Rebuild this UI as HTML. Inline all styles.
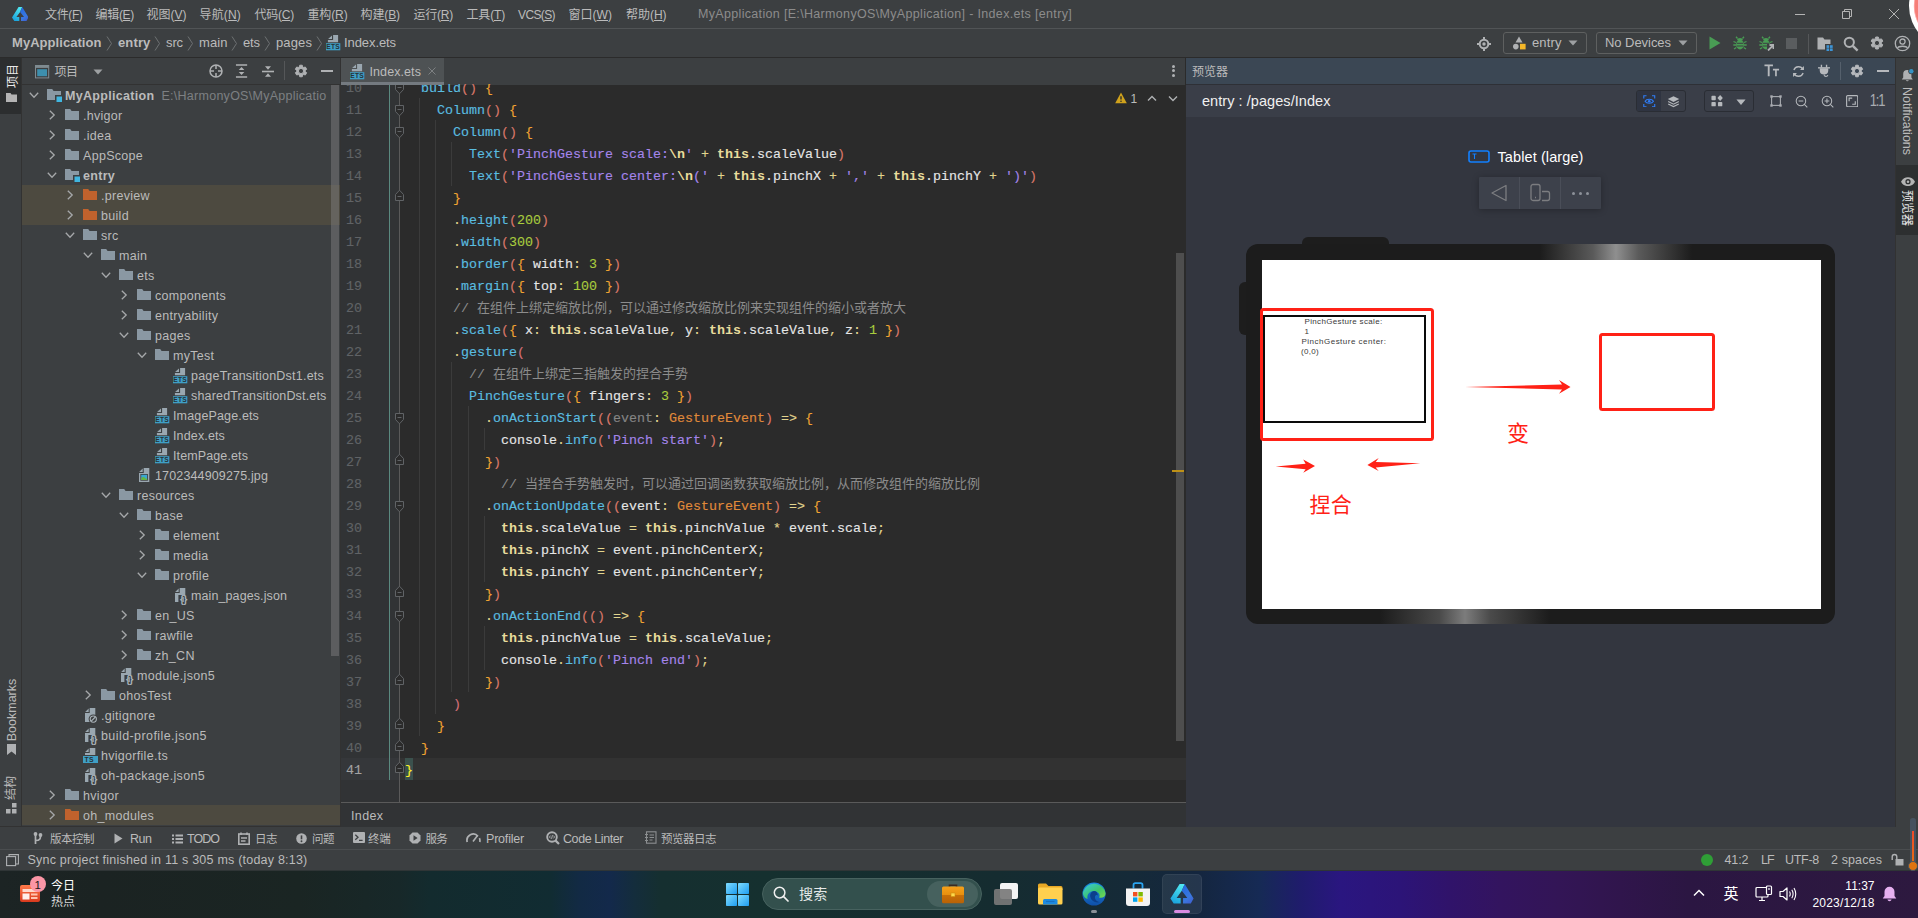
<!DOCTYPE html>
<html lang="zh-CN"><head><meta charset="utf-8"><title>MyApplication - Index.ets</title>
<style>
html,body{margin:0;padding:0;}
body{width:1918px;height:918px;overflow:hidden;background:#3c3f41;position:relative;font-family:'Liberation Sans','Noto Sans CJK SC',sans-serif;}
#root{position:absolute;left:0;top:0;width:1918px;height:918px;overflow:hidden;}
#root div,#root span.t,#root svg{position:absolute;}
span.t{white-space:pre;display:block;}
.code{position:absolute;white-space:pre;font-family:'Liberation Mono','Noto Sans CJK SC',monospace;font-size:13.333px;height:22px;line-height:22px;color:#e6e6e6;-webkit-text-stroke:0.12px currentColor;}
.code i{font-style:normal;font-size:13px;}
.f{color:#5abde0}.s{color:#a585ea}.k{color:#e8dc9c;font-weight:bold;-webkit-text-stroke:0}.n{color:#a9cc3e}.c{color:#8c8c8c;-webkit-text-stroke:0}
.ty{color:#e08a3a}.o{color:#e2d48e}.p1{color:#f0a332}.p2{color:#d8786a}.p3{color:#d47078}.g{color:#858585}
</style></head>
<body><div id="root">
<div style="left:0px;top:0px;width:1918px;height:871px;background:#3c3f41;"></div><div style="left:0px;top:28px;width:1918px;height:1px;background:#515456;"></div><div style="left:0px;top:57px;width:1918px;height:1px;background:#2b2b2b;"></div><svg style="left:11.8px;top:7px;" width="16.5" height="13.9" viewBox="0 0 16.5 13.9"><defs><linearGradient id="laa" x1="0.6" y1="0" x2="0.2" y2="1"><stop offset="0" stop-color="#4fe6f0"/><stop offset="1" stop-color="#18a0dc"/></linearGradient><linearGradient id="lba" x1="0.2" y1="0" x2="0.7" y2="1"><stop offset="0" stop-color="#2468de"/><stop offset=".7" stop-color="#3a78e0"/><stop offset="1" stop-color="#3f62d2"/></linearGradient></defs><path d="M6.56 0H10.2L8.1 4.9L4.4 9.9H7.3V13.9H2.3L0 10.4Z" fill="url(#laa)"/><path d="M10.2 0L16.5 10.4L14.5 13.9H9V9.9H12.05L8.1 4.9Z" fill="url(#lba)"/></svg><span class="t" style="letter-spacing:-0.369px;top:5.0px;height:20px;line-height:20px;font-size:12px;color:#bbbbbb;left:45px;">文件(<u>F</u>)</span><span class="t" style="letter-spacing:-0.303px;top:5.0px;height:20px;line-height:20px;font-size:12px;color:#bbbbbb;left:95.5px;">编辑(<u>E</u>)</span><span class="t" style="letter-spacing:-0.003px;top:5.0px;height:20px;line-height:20px;font-size:12px;color:#bbbbbb;left:146.5px;">视图(<u>V</u>)</span><span class="t" style="letter-spacing:0.166px;top:5.0px;height:20px;line-height:20px;font-size:12px;color:#bbbbbb;left:199.5px;">导航(<u>N</u>)</span><span class="t" style="letter-spacing:-0.234px;top:5.0px;height:20px;line-height:20px;font-size:12px;color:#bbbbbb;left:254.5px;">代码(<u>C</u>)</span><span class="t" style="letter-spacing:-0.134px;top:5.0px;height:20px;line-height:20px;font-size:12px;color:#bbbbbb;left:307.5px;">重构(<u>R</u>)</span><span class="t" style="letter-spacing:-0.103px;top:5.0px;height:20px;line-height:20px;font-size:12px;color:#bbbbbb;left:360.5px;">构建(<u>B</u>)</span><span class="t" style="letter-spacing:-0.234px;top:5.0px;height:20px;line-height:20px;font-size:12px;color:#bbbbbb;left:413.5px;">运行(<u>R</u>)</span><span class="t" style="letter-spacing:-0.169px;top:5.0px;height:20px;line-height:20px;font-size:12px;color:#bbbbbb;left:466.5px;">工具(<u>T</u>)</span><span class="t" style="letter-spacing:-0.615px;top:5.0px;height:20px;line-height:20px;font-size:12px;color:#bbbbbb;left:518px;">VCS(<u>S</u>)</span><span class="t" style="letter-spacing:0.034px;top:5.0px;height:20px;line-height:20px;font-size:12px;color:#bbbbbb;left:568.5px;">窗口(<u>W</u>)</span><span class="t" style="letter-spacing:-0.034px;top:5.0px;height:20px;line-height:20px;font-size:12px;color:#bbbbbb;left:626px;">帮助(<u>H</u>)</span><span class="t" style="letter-spacing:0.329px;top:4.0px;height:20px;line-height:20px;font-size:12.5px;color:#8c8c8c;left:698px;">MyApplication [E:\HarmonyOS\MyApplication] - Index.ets [entry]</span><svg style="left:1795px;top:9px;" width="10" height="10" viewBox="0 0 10 10"><path d="M0 5.5H10" stroke="#b4b4b4" stroke-width="1"/></svg><svg style="left:1842px;top:9px;" width="10" height="10" viewBox="0 0 10 10"><path d="M0.5 2.5H7.5V9.5H0.5Z M2.5 2.5V0.5H9.5V7.5H7.5" fill="none" stroke="#b4b4b4" stroke-width="1"/></svg><svg style="left:1889px;top:9px;" width="10" height="10" viewBox="0 0 10 10"><path d="M0 0L10 10M10 0L0 10" stroke="#b4b4b4" stroke-width="1"/></svg><div style="left:1909px;top:-36px;width:84px;height:84px;border-radius:50%;background:radial-gradient(circle at 50% 50%,#f0564e 0,#f6807a 36px,#fbb 37px,#ffffff 37.6px);box-sizing:border-box;"></div><span class="t" style="letter-spacing:0.050px;top:32.5px;height:20px;line-height:20px;font-size:13px;color:#bbbbbb;left:12px;font-weight:bold;">MyApplication</span><span class="t" style="letter-spacing:0.141px;top:32.5px;height:20px;line-height:20px;font-size:13px;color:#bbbbbb;left:118px;font-weight:bold;">entry</span><span class="t" style="letter-spacing:-0.115px;top:32.5px;height:20px;line-height:20px;font-size:13px;color:#bbbbbb;left:166px;">src</span><span class="t" style="letter-spacing:0.078px;top:32.5px;height:20px;line-height:20px;font-size:13px;color:#bbbbbb;left:199px;">main</span><span class="t" style="letter-spacing:-0.115px;top:32.5px;height:20px;line-height:20px;font-size:13px;color:#bbbbbb;left:243px;">ets</span><span class="t" style="letter-spacing:0.116px;top:32.5px;height:20px;line-height:20px;font-size:13px;color:#bbbbbb;left:276px;">pages</span><svg style="left:105.5px;top:36px;" width="7" height="15" viewBox="0 0 7 15"><path d="M1 0.5L5.5 7.5L1 14.5" fill="none" stroke="#6e7173" stroke-width="1"/></svg><svg style="left:153.5px;top:36px;" width="7" height="15" viewBox="0 0 7 15"><path d="M1 0.5L5.5 7.5L1 14.5" fill="none" stroke="#6e7173" stroke-width="1"/></svg><svg style="left:186.5px;top:36px;" width="7" height="15" viewBox="0 0 7 15"><path d="M1 0.5L5.5 7.5L1 14.5" fill="none" stroke="#6e7173" stroke-width="1"/></svg><svg style="left:230.5px;top:36px;" width="7" height="15" viewBox="0 0 7 15"><path d="M1 0.5L5.5 7.5L1 14.5" fill="none" stroke="#6e7173" stroke-width="1"/></svg><svg style="left:263.5px;top:36px;" width="7" height="15" viewBox="0 0 7 15"><path d="M1 0.5L5.5 7.5L1 14.5" fill="none" stroke="#6e7173" stroke-width="1"/></svg><svg style="left:315.5px;top:36px;" width="7" height="15" viewBox="0 0 7 15"><path d="M1 0.5L5.5 7.5L1 14.5" fill="none" stroke="#6e7173" stroke-width="1"/></svg><span class="t" style="letter-spacing:-0.085px;top:32.5px;height:20px;line-height:20px;font-size:13px;color:#bbbbbb;left:344px;">Index.ets</span><svg style="left:326px;top:35.3px;" width="15" height="16" viewBox="0 0 15 16"><path d="M7.1 0H12.1V7.2H1.9V5H7.1Z" fill="#9aa7b0"/><path d="M6 0.6V4H2.1Z" fill="#9aa7b0"/><rect x="0" y="8.2" width="14.3" height="7.1" fill="#3f9fc5"/><text x="7.15" y="14.3" font-size="6.6" font-weight="bold" text-anchor="middle" fill="#263238" font-family="Liberation Sans,sans-serif" letter-spacing=".3">ETS</text></svg><svg style="left:1476px;top:35.5px;" width="16" height="16" viewBox="0 0 16 16"><circle cx="8" cy="8" r="4.3" fill="none" stroke="#afb1b3" stroke-width="2"/><circle cx="8" cy="8" r="1.7" fill="#afb1b3"/><path d="M8 1V3M8 13V15M1 8H3M13 8H15" stroke="#afb1b3" stroke-width="2"/></svg><div style="left:1503px;top:32px;width:84px;height:22px;box-sizing:border-box;border:1px solid #5e6060;border-radius:3px;background:#3c3f41;"></div><svg style="left:1512px;top:36px;" width="14" height="14" viewBox="0 0 14 14"><path d="M7 0.5L10.5 6.5H3.5Z" fill="#afb1b3"/><circle cx="3.8" cy="10.6" r="2.8" fill="#afb1b3"/><rect x="8" y="7.8" width="5.6" height="5.6" fill="#f4b728"/></svg><span class="t" style="letter-spacing:0.119px;top:33.3px;height:20px;line-height:20px;font-size:13px;color:#bbbbbb;left:1532px;">entry</span><svg style="left:1568px;top:40px;" width="10" height="6" viewBox="0 0 10 6"><path d="M0.5 0.5H9.5L5 5.5Z" fill="#9da0a2"/></svg><div style="left:1596px;top:32px;width:101px;height:22px;box-sizing:border-box;border:1px solid #5e6060;border-radius:3px;background:#3c3f41;"></div><span class="t" style="letter-spacing:-0.047px;top:33.3px;height:20px;line-height:20px;font-size:13px;color:#bbbbbb;left:1605px;">No Devices</span><svg style="left:1678px;top:40px;" width="10" height="6" viewBox="0 0 10 6"><path d="M0.5 0.5H9.5L5 5.5Z" fill="#9da0a2"/></svg><svg style="left:1708px;top:36px;" width="14" height="14" viewBox="0 0 14 14"><path d="M1.5 0.5L12.5 7L1.5 13.5Z" fill="#499c54"/></svg><svg style="left:1733px;top:36px;" width="15" height="15" viewBox="0 0 15 15"><ellipse cx="7" cy="8.6" rx="3.9" ry="4.9" fill="#499c54"/><path d="M3.8 4.2A3.3 3 0 0 1 10.2 4.2Z" fill="#499c54"/><path d="M4.5 2.5L3 0.8M9.5 2.5L11 0.8M3 6.5L0.5 5.5M11 6.5L13.5 5.5M3 9H0.3M11 9H13.7M3.3 11.5L1 13M10.7 11.5L13 13" stroke="#499c54" stroke-width="1.3" fill="none"/><path d="M4 7.3H10M4 10H10" stroke="#3c3f41" stroke-width="1"/></svg><svg style="left:1759px;top:36px;" width="15" height="15" viewBox="0 0 15 15"><ellipse cx="7" cy="8.6" rx="3.9" ry="4.9" fill="#499c54"/><path d="M3.8 4.2A3.3 3 0 0 1 10.2 4.2Z" fill="#499c54"/><path d="M4.5 2.5L3 0.8M9.5 2.5L11 0.8M3 6.5L0.5 5.5M11 6.5L13.5 5.5M3 9H0.3M11 9H13.7M3.3 11.5L1 13M10.7 11.5L13 13" stroke="#499c54" stroke-width="1.3" fill="none"/><path d="M4 7.3H10M4 10H10" stroke="#3c3f41" stroke-width="1"/><rect x="8" y="8" width="7" height="7" fill="#3c3f41"/><path d="M9 14.5L14 9.5M10.5 9H14.5V13" stroke="#afb1b3" stroke-width="1.8" fill="none"/></svg><div style="left:1786px;top:38px;width:11px;height:11px;background:#5a5d5f;"></div><div style="left:1808px;top:34px;width:1px;height:20px;background:#555759;"></div><svg style="left:1817px;top:36px;" width="16" height="15" viewBox="0 0 16 15"><path d="M0.5 1.5H6L7.5 3.5H13.5V8H8V13.5H0.5Z" fill="#afb1b3"/><rect x="9.5" y="9.2" width="2.7" height="2.7" fill="#3d94d6"/><rect x="13" y="9.2" width="2.7" height="2.7" fill="#3d94d6"/><rect x="9.5" y="12.4" width="2.7" height="2.7" fill="#3d94d6"/><rect x="13" y="12.4" width="2.7" height="2.7" fill="#3d94d6"/></svg><svg style="left:1843px;top:36px;" width="16" height="16" viewBox="0 0 16 16"><circle cx="6.3" cy="6.3" r="4.6" fill="none" stroke="#afb1b3" stroke-width="2"/><path d="M9.8 9.8L14.6 14.6" stroke="#afb1b3" stroke-width="2.4"/></svg><svg style="left:1869px;top:35.2px;" width="16" height="16" viewBox="0 0 16 16"><g transform="translate(8 8)"><path d="M1.90 -4.08L1.27 -5.97L-1.27 -5.97L-1.90 -4.08L-2.58 -3.69L-4.53 -4.08L-5.80 -1.89L-4.48 -0.39L-4.48 0.39L-5.80 1.89L-4.53 4.08L-2.58 3.69L-1.90 4.08L-1.27 5.97L1.27 5.97L1.90 4.08L2.58 3.69L4.53 4.08L5.80 1.89L4.48 0.39L4.48 -0.39L5.80 -1.89L4.53 -4.08L2.58 -3.69ZM2.6 0A2.6 2.6 0 1 0 -2.6 0A2.6 2.6 0 1 0 2.6 0Z" fill="#afb1b3" fill-rule="evenodd" stroke="#afb1b3" stroke-width="1" stroke-linejoin="round"/></g></svg><svg style="left:1894px;top:35px;" width="17" height="17" viewBox="0 0 17 17"><circle cx="8.5" cy="8.5" r="7.2" fill="none" stroke="#afb1b3" stroke-width="1.3"/><circle cx="8.5" cy="6.6" r="2.6" fill="none" stroke="#afb1b3" stroke-width="1.3"/><path d="M3.6 13.2C4.6 10.6 12.4 10.6 13.4 13.2" fill="none" stroke="#afb1b3" stroke-width="1.3"/></svg><div style="left:0px;top:58px;width:22px;height:769px;background:#3c3f41;"></div><div style="left:0px;top:58px;width:21px;height:56px;background:#2c2e2f;"></div><span class="t" style="top:68.0px;height:16px;line-height:16px;font-size:12px;color:#e8e8e8;left:-87.0px;width:200px;text-align:center;transform:rotate(-90deg);transform-origin:50% 50%;">项目</span><svg style="left:6px;top:93px;" width="11" height="9" viewBox="0 0 11 9"><path d="M0 0H4.5L5.5 1.5H11V9H0Z" fill="#b4b4b4"/></svg><span class="t" style="top:702.0px;height:16px;line-height:16px;font-size:12.5px;color:#bbbbbb;left:-88.5px;width:200px;text-align:center;transform:rotate(-90deg);transform-origin:50% 50%;">Bookmarks</span><svg style="left:7px;top:744px;" width="9" height="11" viewBox="0 0 9 11"><path d="M0 0H9V11L4.5 7.5L0 11Z" fill="#afb1b3"/></svg><span class="t" style="top:780.0px;height:16px;line-height:16px;font-size:12px;color:#bbbbbb;left:-89.0px;width:200px;text-align:center;transform:rotate(-90deg);transform-origin:50% 50%;">结构</span><svg style="left:6px;top:803px;" width="11" height="11" viewBox="0 0 11 11"><rect x="6" y="0" width="4.5" height="4.5" fill="#afb1b3"/><rect x="0" y="6" width="4.5" height="4.5" fill="#afb1b3"/><rect x="6" y="6" width="4.5" height="4.5" fill="#afb1b3"/></svg><div style="left:21px;top:58px;width:1px;height:769px;background:#323232;"></div><div style="left:22px;top:58px;width:319px;height:26px;background:#3c3f41;"></div><div style="left:22px;top:84px;width:319px;height:1px;background:#323232;"></div><svg style="left:35px;top:64.5px;" width="15" height="14" viewBox="0 0 15 14"><rect x="0.5" y="0.5" width="13.2" height="12.4" fill="#3c3f41" stroke="#7f8b91" stroke-width="1"/><rect x="0.5" y="0.5" width="13.2" height="2.4" fill="#7f8b91"/><rect x="2.2" y="4.2" width="9.8" height="7" fill="#3d8fae"/></svg><span class="t" style="letter-spacing:-0.508px;top:61.5px;height:20px;line-height:20px;font-size:12px;color:#bbbbbb;left:54.5px;">项目</span><svg style="left:93px;top:69px;" width="10" height="6" viewBox="0 0 10 6"><path d="M0.5 0.5H9.5L5 5.5Z" fill="#9da0a2"/></svg><svg style="left:208px;top:62.7px;" width="16" height="16" viewBox="0 0 16 16"><circle cx="8" cy="8" r="6" fill="none" stroke="#afb1b3" stroke-width="1.5"/><path d="M8 2V6M8 10V14M2 8H6M10 8H14" stroke="#afb1b3" stroke-width="1.5"/></svg><svg style="left:235.4px;top:64.3px;" width="13.1" height="14" viewBox="0 0 14 15"><path d="M1 1H13M1 14H13" stroke="#afb1b3" stroke-width="1.6"/><path d="M7 3.2L10 6.4H4ZM7 11.8L10 8.6H4Z" fill="#afb1b3"/></svg><svg style="left:261px;top:64px;" width="14" height="15" viewBox="0 0 14 15"><path d="M1 7.5H13" stroke="#afb1b3" stroke-width="1.6"/><path d="M7 5.8L10 2.2H4ZM7 9.2L10 12.8H4Z" fill="#afb1b3"/></svg><div style="left:284px;top:61px;width:1px;height:19px;background:#555759;"></div><svg style="left:293px;top:62.8px;" width="16" height="16" viewBox="0 0 16 16"><g transform="translate(8 8)"><path d="M1.82 -3.90L1.23 -5.77L-1.23 -5.77L-1.82 -3.90L-2.47 -3.52L-4.38 -3.95L-5.61 -1.82L-4.28 -0.37L-4.28 0.37L-5.61 1.82L-4.38 3.95L-2.47 3.52L-1.82 3.90L-1.23 5.77L1.23 5.77L1.82 3.90L2.47 3.52L4.38 3.95L5.61 1.82L4.28 0.37L4.28 -0.37L5.61 -1.82L4.38 -3.95L2.47 -3.52ZM2.6 0A2.6 2.6 0 1 0 -2.6 0A2.6 2.6 0 1 0 2.6 0Z" fill="#afb1b3" fill-rule="evenodd" stroke="#afb1b3" stroke-width="1" stroke-linejoin="round"/></g></svg><div style="left:320.5px;top:70px;width:12.5px;height:2px;background:#afb1b3;"></div><svg style="left:28.5px;top:91.5px;" width="10" height="7" viewBox="0 0 10 7"><path d="M0.8 0.8L5 5.2L9.2 0.8" fill="none" stroke="#a6a8aa" stroke-width="1.3"/></svg><svg style="left:47px;top:88.5px;" width="15" height="14" viewBox="0 0 15 14"><path d="M0 0H5.2L6.6 2H14V6H8V11H0Z" fill="#8a98a3"/><rect x="9.5" y="7.5" width="5.5" height="5.5" fill="#40b6e0"/></svg><span class="t" style="letter-spacing:0.314px;top:85.5px;height:20px;line-height:20px;font-size:12.5px;color:#bbbbbb;left:65px;font-weight:bold;">MyApplication</span><svg style="left:48.5px;top:110px;" width="7" height="10" viewBox="0 0 7 10"><path d="M0.8 0.8L5.2 5L0.8 9.2" fill="none" stroke="#a6a8aa" stroke-width="1.3"/></svg><svg style="left:65px;top:108.5px;" width="15" height="14" viewBox="0 0 15 14"><path d="M0 0H5.2L6.6 2H14V11H0Z" fill="#8a98a3"/></svg><span class="t" style="letter-spacing:0.281px;top:105.5px;height:20px;line-height:20px;font-size:12.5px;color:#bbbbbb;left:83px;">.hvigor</span><svg style="left:48.5px;top:130px;" width="7" height="10" viewBox="0 0 7 10"><path d="M0.8 0.8L5.2 5L0.8 9.2" fill="none" stroke="#a6a8aa" stroke-width="1.3"/></svg><svg style="left:65px;top:128.5px;" width="15" height="14" viewBox="0 0 15 14"><path d="M0 0H5.2L6.6 2H14V11H0Z" fill="#8a98a3"/></svg><span class="t" style="top:125.5px;height:20px;line-height:20px;font-size:12.5px;color:#bbbbbb;left:83px;letter-spacing:0.3px;">.idea</span><svg style="left:48.5px;top:150px;" width="7" height="10" viewBox="0 0 7 10"><path d="M0.8 0.8L5.2 5L0.8 9.2" fill="none" stroke="#a6a8aa" stroke-width="1.3"/></svg><svg style="left:65px;top:148.5px;" width="15" height="14" viewBox="0 0 15 14"><path d="M0 0H5.2L6.6 2H14V11H0Z" fill="#8a98a3"/></svg><span class="t" style="top:145.5px;height:20px;line-height:20px;font-size:12.5px;color:#bbbbbb;left:83px;letter-spacing:0.3px;">AppScope</span><svg style="left:46.5px;top:171.5px;" width="10" height="7" viewBox="0 0 10 7"><path d="M0.8 0.8L5 5.2L9.2 0.8" fill="none" stroke="#a6a8aa" stroke-width="1.3"/></svg><svg style="left:65px;top:168.5px;" width="15" height="14" viewBox="0 0 15 14"><path d="M0 0H5.2L6.6 2H14V6H8V11H0Z" fill="#8a98a3"/><rect x="9.5" y="7.5" width="5.5" height="5.5" fill="#40b6e0"/></svg><span class="t" style="top:165.5px;height:20px;line-height:20px;font-size:12.5px;color:#bbbbbb;left:83px;font-weight:bold;letter-spacing:0.3px;">entry</span><div style="left:22px;top:185px;width:318px;height:20px;background:#4d4a40;"></div><svg style="left:66.5px;top:190px;" width="7" height="10" viewBox="0 0 7 10"><path d="M0.8 0.8L5.2 5L0.8 9.2" fill="none" stroke="#a6a8aa" stroke-width="1.3"/></svg><svg style="left:83px;top:188.5px;" width="15" height="14" viewBox="0 0 15 14"><path d="M0 0H5.2L6.6 2H14V11H0Z" fill="#c0622d"/></svg><span class="t" style="top:185.5px;height:20px;line-height:20px;font-size:12.5px;color:#bbbbbb;left:101px;letter-spacing:0.3px;">.preview</span><div style="left:22px;top:205px;width:318px;height:20px;background:#4d4a40;"></div><svg style="left:66.5px;top:210px;" width="7" height="10" viewBox="0 0 7 10"><path d="M0.8 0.8L5.2 5L0.8 9.2" fill="none" stroke="#a6a8aa" stroke-width="1.3"/></svg><svg style="left:83px;top:208.5px;" width="15" height="14" viewBox="0 0 15 14"><path d="M0 0H5.2L6.6 2H14V11H0Z" fill="#c0622d"/></svg><span class="t" style="top:205.5px;height:20px;line-height:20px;font-size:12.5px;color:#bbbbbb;left:101px;letter-spacing:0.3px;">build</span><svg style="left:64.5px;top:231.5px;" width="10" height="7" viewBox="0 0 10 7"><path d="M0.8 0.8L5 5.2L9.2 0.8" fill="none" stroke="#a6a8aa" stroke-width="1.3"/></svg><svg style="left:83px;top:228.5px;" width="15" height="14" viewBox="0 0 15 14"><path d="M0 0H5.2L6.6 2H14V11H0Z" fill="#8a98a3"/></svg><span class="t" style="top:225.5px;height:20px;line-height:20px;font-size:12.5px;color:#bbbbbb;left:101px;letter-spacing:0.3px;">src</span><svg style="left:82.5px;top:251.5px;" width="10" height="7" viewBox="0 0 10 7"><path d="M0.8 0.8L5 5.2L9.2 0.8" fill="none" stroke="#a6a8aa" stroke-width="1.3"/></svg><svg style="left:101px;top:248.5px;" width="15" height="14" viewBox="0 0 15 14"><path d="M0 0H5.2L6.6 2H14V11H0Z" fill="#8a98a3"/></svg><span class="t" style="top:245.5px;height:20px;line-height:20px;font-size:12.5px;color:#bbbbbb;left:119px;letter-spacing:0.3px;">main</span><svg style="left:100.5px;top:271.5px;" width="10" height="7" viewBox="0 0 10 7"><path d="M0.8 0.8L5 5.2L9.2 0.8" fill="none" stroke="#a6a8aa" stroke-width="1.3"/></svg><svg style="left:119px;top:268.5px;" width="15" height="14" viewBox="0 0 15 14"><path d="M0 0H5.2L6.6 2H14V11H0Z" fill="#8a98a3"/></svg><span class="t" style="top:265.5px;height:20px;line-height:20px;font-size:12.5px;color:#bbbbbb;left:137px;letter-spacing:0.3px;">ets</span><svg style="left:120.5px;top:290px;" width="7" height="10" viewBox="0 0 7 10"><path d="M0.8 0.8L5.2 5L0.8 9.2" fill="none" stroke="#a6a8aa" stroke-width="1.3"/></svg><svg style="left:137px;top:288.5px;" width="15" height="14" viewBox="0 0 15 14"><path d="M0 0H5.2L6.6 2H14V11H0Z" fill="#8a98a3"/></svg><span class="t" style="top:285.5px;height:20px;line-height:20px;font-size:12.5px;color:#bbbbbb;left:155px;letter-spacing:0.3px;">components</span><svg style="left:120.5px;top:310px;" width="7" height="10" viewBox="0 0 7 10"><path d="M0.8 0.8L5.2 5L0.8 9.2" fill="none" stroke="#a6a8aa" stroke-width="1.3"/></svg><svg style="left:137px;top:308.5px;" width="15" height="14" viewBox="0 0 15 14"><path d="M0 0H5.2L6.6 2H14V11H0Z" fill="#8a98a3"/></svg><span class="t" style="top:305.5px;height:20px;line-height:20px;font-size:12.5px;color:#bbbbbb;left:155px;letter-spacing:0.3px;">entryability</span><svg style="left:118.5px;top:331.5px;" width="10" height="7" viewBox="0 0 10 7"><path d="M0.8 0.8L5 5.2L9.2 0.8" fill="none" stroke="#a6a8aa" stroke-width="1.3"/></svg><svg style="left:137px;top:328.5px;" width="15" height="14" viewBox="0 0 15 14"><path d="M0 0H5.2L6.6 2H14V11H0Z" fill="#8a98a3"/></svg><span class="t" style="top:325.5px;height:20px;line-height:20px;font-size:12.5px;color:#bbbbbb;left:155px;letter-spacing:0.3px;">pages</span><svg style="left:136.5px;top:351.5px;" width="10" height="7" viewBox="0 0 10 7"><path d="M0.8 0.8L5 5.2L9.2 0.8" fill="none" stroke="#a6a8aa" stroke-width="1.3"/></svg><svg style="left:155px;top:348.5px;" width="15" height="14" viewBox="0 0 15 14"><path d="M0 0H5.2L6.6 2H14V11H0Z" fill="#8a98a3"/></svg><span class="t" style="top:345.5px;height:20px;line-height:20px;font-size:12.5px;color:#bbbbbb;left:173px;letter-spacing:0.3px;">myTest</span><svg style="left:172.9px;top:367.8px;" width="15" height="16" viewBox="0 0 15 16"><path d="M7.1 0H12.1V7.2H1.9V5H7.1Z" fill="#9aa7b0"/><path d="M6 0.6V4H2.1Z" fill="#9aa7b0"/><rect x="0" y="8.2" width="14.3" height="7.1" fill="#3f9fc5"/><text x="7.15" y="14.3" font-size="6.6" font-weight="bold" text-anchor="middle" fill="#263238" font-family="Liberation Sans,sans-serif" letter-spacing=".3">ETS</text></svg><span class="t" style="letter-spacing:0.224px;top:365.5px;height:20px;line-height:20px;font-size:12.5px;color:#bbbbbb;left:191px;">pageTransitionDst1.ets</span><svg style="left:172.9px;top:387.8px;" width="15" height="16" viewBox="0 0 15 16"><path d="M7.1 0H12.1V7.2H1.9V5H7.1Z" fill="#9aa7b0"/><path d="M6 0.6V4H2.1Z" fill="#9aa7b0"/><rect x="0" y="8.2" width="14.3" height="7.1" fill="#3f9fc5"/><text x="7.15" y="14.3" font-size="6.6" font-weight="bold" text-anchor="middle" fill="#263238" font-family="Liberation Sans,sans-serif" letter-spacing=".3">ETS</text></svg><span class="t" style="letter-spacing:0.172px;top:385.5px;height:20px;line-height:20px;font-size:12.5px;color:#bbbbbb;left:191px;">sharedTransitionDst.ets</span><svg style="left:154.9px;top:407.8px;" width="15" height="16" viewBox="0 0 15 16"><path d="M7.1 0H12.1V7.2H1.9V5H7.1Z" fill="#9aa7b0"/><path d="M6 0.6V4H2.1Z" fill="#9aa7b0"/><rect x="0" y="8.2" width="14.3" height="7.1" fill="#3f9fc5"/><text x="7.15" y="14.3" font-size="6.6" font-weight="bold" text-anchor="middle" fill="#263238" font-family="Liberation Sans,sans-serif" letter-spacing=".3">ETS</text></svg><span class="t" style="letter-spacing:0.147px;top:405.5px;height:20px;line-height:20px;font-size:12.5px;color:#bbbbbb;left:173px;">ImagePage.ets</span><svg style="left:154.9px;top:427.8px;" width="15" height="16" viewBox="0 0 15 16"><path d="M7.1 0H12.1V7.2H1.9V5H7.1Z" fill="#9aa7b0"/><path d="M6 0.6V4H2.1Z" fill="#9aa7b0"/><rect x="0" y="8.2" width="14.3" height="7.1" fill="#3f9fc5"/><text x="7.15" y="14.3" font-size="6.6" font-weight="bold" text-anchor="middle" fill="#263238" font-family="Liberation Sans,sans-serif" letter-spacing=".3">ETS</text></svg><span class="t" style="letter-spacing:0.141px;top:425.5px;height:20px;line-height:20px;font-size:12.5px;color:#bbbbbb;left:173px;">Index.ets</span><svg style="left:154.9px;top:447.8px;" width="15" height="16" viewBox="0 0 15 16"><path d="M7.1 0H12.1V7.2H1.9V5H7.1Z" fill="#9aa7b0"/><path d="M6 0.6V4H2.1Z" fill="#9aa7b0"/><rect x="0" y="8.2" width="14.3" height="7.1" fill="#3f9fc5"/><text x="7.15" y="14.3" font-size="6.6" font-weight="bold" text-anchor="middle" fill="#263238" font-family="Liberation Sans,sans-serif" letter-spacing=".3">ETS</text></svg><span class="t" style="letter-spacing:0.112px;top:445.5px;height:20px;line-height:20px;font-size:12.5px;color:#bbbbbb;left:173px;">ItemPage.ets</span><svg style="left:139px;top:468px;" width="11" height="15" viewBox="0 0 11 15"><path d="M4.7 0H10.3V14H0V5H4.7Z" fill="#9aa7b0"/><path d="M3.7 0.6V4H0.2Z" fill="#9aa7b0"/><rect x="1.4" y="6" width="7.5" height="6.7" fill="#3c3f41"/><rect x="2.2" y="6.8" width="5.9" height="5.1" fill="#3aa6d0"/><path d="M2.2 11.9V10.2C3.6 8.6 5.2 8.8 6.4 10.2L8.1 10.9V11.9Z" fill="#62b543"/></svg><span class="t" style="letter-spacing:0.145px;top:465.5px;height:20px;line-height:20px;font-size:12.5px;color:#bbbbbb;left:155px;">1702344909275.jpg</span><svg style="left:100.5px;top:491.5px;" width="10" height="7" viewBox="0 0 10 7"><path d="M0.8 0.8L5 5.2L9.2 0.8" fill="none" stroke="#a6a8aa" stroke-width="1.3"/></svg><svg style="left:119px;top:488.5px;" width="15" height="14" viewBox="0 0 15 14"><path d="M0 0H5.2L6.6 2H14V11H0Z" fill="#8a98a3"/></svg><span class="t" style="top:485.5px;height:20px;line-height:20px;font-size:12.5px;color:#bbbbbb;left:137px;letter-spacing:0.3px;">resources</span><svg style="left:118.5px;top:511.5px;" width="10" height="7" viewBox="0 0 10 7"><path d="M0.8 0.8L5 5.2L9.2 0.8" fill="none" stroke="#a6a8aa" stroke-width="1.3"/></svg><svg style="left:137px;top:508.5px;" width="15" height="14" viewBox="0 0 15 14"><path d="M0 0H5.2L6.6 2H14V11H0Z" fill="#8a98a3"/></svg><span class="t" style="top:505.5px;height:20px;line-height:20px;font-size:12.5px;color:#bbbbbb;left:155px;letter-spacing:0.3px;">base</span><svg style="left:138.5px;top:530px;" width="7" height="10" viewBox="0 0 7 10"><path d="M0.8 0.8L5.2 5L0.8 9.2" fill="none" stroke="#a6a8aa" stroke-width="1.3"/></svg><svg style="left:155px;top:528.5px;" width="15" height="14" viewBox="0 0 15 14"><path d="M0 0H5.2L6.6 2H14V11H0Z" fill="#8a98a3"/></svg><span class="t" style="top:525.5px;height:20px;line-height:20px;font-size:12.5px;color:#bbbbbb;left:173px;letter-spacing:0.3px;">element</span><svg style="left:138.5px;top:550px;" width="7" height="10" viewBox="0 0 7 10"><path d="M0.8 0.8L5.2 5L0.8 9.2" fill="none" stroke="#a6a8aa" stroke-width="1.3"/></svg><svg style="left:155px;top:548.5px;" width="15" height="14" viewBox="0 0 15 14"><path d="M0 0H5.2L6.6 2H14V11H0Z" fill="#8a98a3"/></svg><span class="t" style="top:545.5px;height:20px;line-height:20px;font-size:12.5px;color:#bbbbbb;left:173px;letter-spacing:0.3px;">media</span><svg style="left:136.5px;top:571.5px;" width="10" height="7" viewBox="0 0 10 7"><path d="M0.8 0.8L5 5.2L9.2 0.8" fill="none" stroke="#a6a8aa" stroke-width="1.3"/></svg><svg style="left:155px;top:568.5px;" width="15" height="14" viewBox="0 0 15 14"><path d="M0 0H5.2L6.6 2H14V11H0Z" fill="#8a98a3"/></svg><span class="t" style="top:565.5px;height:20px;line-height:20px;font-size:12.5px;color:#bbbbbb;left:173px;letter-spacing:0.3px;">profile</span><svg style="left:175px;top:588px;" width="14" height="17" viewBox="0 0 14 17"><path d="M4.7 0H10.3V14H0V5H4.7Z" fill="#9aa7b0"/><path d="M3.7 0.6V4H0.2Z" fill="#9aa7b0"/><path d="M3.4 7H14V17H3.4Z" fill="#3c3f41"/><text x="8.4" y="14.6" font-size="10" font-weight="bold" text-anchor="middle" fill="#aab3b9" font-family="Liberation Sans,sans-serif" letter-spacing="-.6">{}</text><path d="M8.1 9V14" stroke="#aab3b9" stroke-width="1.2"/></svg><span class="t" style="letter-spacing:0.099px;top:585.5px;height:20px;line-height:20px;font-size:12.5px;color:#bbbbbb;left:191px;">main_pages.json</span><svg style="left:120.5px;top:610px;" width="7" height="10" viewBox="0 0 7 10"><path d="M0.8 0.8L5.2 5L0.8 9.2" fill="none" stroke="#a6a8aa" stroke-width="1.3"/></svg><svg style="left:137px;top:608.5px;" width="15" height="14" viewBox="0 0 15 14"><path d="M0 0H5.2L6.6 2H14V11H0Z" fill="#8a98a3"/></svg><span class="t" style="top:605.5px;height:20px;line-height:20px;font-size:12.5px;color:#bbbbbb;left:155px;letter-spacing:0.3px;">en_US</span><svg style="left:120.5px;top:630px;" width="7" height="10" viewBox="0 0 7 10"><path d="M0.8 0.8L5.2 5L0.8 9.2" fill="none" stroke="#a6a8aa" stroke-width="1.3"/></svg><svg style="left:137px;top:628.5px;" width="15" height="14" viewBox="0 0 15 14"><path d="M0 0H5.2L6.6 2H14V11H0Z" fill="#8a98a3"/></svg><span class="t" style="top:625.5px;height:20px;line-height:20px;font-size:12.5px;color:#bbbbbb;left:155px;letter-spacing:0.3px;">rawfile</span><svg style="left:120.5px;top:650px;" width="7" height="10" viewBox="0 0 7 10"><path d="M0.8 0.8L5.2 5L0.8 9.2" fill="none" stroke="#a6a8aa" stroke-width="1.3"/></svg><svg style="left:137px;top:648.5px;" width="15" height="14" viewBox="0 0 15 14"><path d="M0 0H5.2L6.6 2H14V11H0Z" fill="#8a98a3"/></svg><span class="t" style="top:645.5px;height:20px;line-height:20px;font-size:12.5px;color:#bbbbbb;left:155px;letter-spacing:0.3px;">zh_CN</span><svg style="left:121px;top:668px;" width="14" height="17" viewBox="0 0 14 17"><path d="M4.7 0H10.3V14H0V5H4.7Z" fill="#9aa7b0"/><path d="M3.7 0.6V4H0.2Z" fill="#9aa7b0"/><path d="M3.4 7H14V17H3.4Z" fill="#3c3f41"/><text x="8.4" y="14.6" font-size="10" font-weight="bold" text-anchor="middle" fill="#aab3b9" font-family="Liberation Sans,sans-serif" letter-spacing="-.6">{}</text><path d="M8.1 9V14" stroke="#aab3b9" stroke-width="1.2"/></svg><span class="t" style="letter-spacing:0.303px;top:665.5px;height:20px;line-height:20px;font-size:12.5px;color:#bbbbbb;left:137px;">module.json5</span><svg style="left:84.5px;top:690px;" width="7" height="10" viewBox="0 0 7 10"><path d="M0.8 0.8L5.2 5L0.8 9.2" fill="none" stroke="#a6a8aa" stroke-width="1.3"/></svg><svg style="left:101px;top:688.5px;" width="15" height="14" viewBox="0 0 15 14"><path d="M0 0H5.2L6.6 2H14V11H0Z" fill="#8a98a3"/></svg><span class="t" style="top:685.5px;height:20px;line-height:20px;font-size:12.5px;color:#bbbbbb;left:119px;letter-spacing:0.3px;">ohosTest</span><svg style="left:85px;top:708px;" width="14" height="16" viewBox="0 0 14 16"><path d="M4.7 0H10.3V14H0V5H4.7Z" fill="#9aa7b0"/><path d="M3.7 0.6V4H0.2Z" fill="#9aa7b0"/><circle cx="8.3" cy="11.1" r="4.7" fill="#3c3f41"/><circle cx="8.3" cy="11.1" r="3.1" fill="none" stroke="#aab3b9" stroke-width="1.1"/><path d="M6.2 13.2L10.4 9" stroke="#aab3b9" stroke-width="1.1"/></svg><span class="t" style="top:705.5px;height:20px;line-height:20px;font-size:12.5px;color:#bbbbbb;left:101px;letter-spacing:0.3px;">.gitignore</span><svg style="left:85px;top:728px;" width="14" height="17" viewBox="0 0 14 17"><path d="M4.7 0H10.3V14H0V5H4.7Z" fill="#9aa7b0"/><path d="M3.7 0.6V4H0.2Z" fill="#9aa7b0"/><path d="M3.4 7H14V17H3.4Z" fill="#3c3f41"/><text x="8.4" y="14.6" font-size="10" font-weight="bold" text-anchor="middle" fill="#aab3b9" font-family="Liberation Sans,sans-serif" letter-spacing="-.6">{}</text><path d="M8.1 9V14" stroke="#aab3b9" stroke-width="1.2"/></svg><span class="t" style="letter-spacing:0.422px;top:725.5px;height:20px;line-height:20px;font-size:12.5px;color:#bbbbbb;left:101px;">build-profile.json5</span><svg style="left:83px;top:748px;" width="16" height="15" viewBox="0 0 16 15"><g transform="translate(2 0)"><path d="M4.7 0H10.3V7H0V5H4.7Z" fill="#9aa7b0"/><path d="M3.7 0.6V4H0.2Z" fill="#9aa7b0"/></g><rect x="0" y="8" width="15" height="7" fill="#3f9fc5"/><text x="1.5" y="14" font-size="6.8" font-weight="bold" fill="#263238" font-family="Liberation Sans,sans-serif" letter-spacing=".3">TS</text></svg><span class="t" style="letter-spacing:0.290px;top:745.5px;height:20px;line-height:20px;font-size:12.5px;color:#bbbbbb;left:101px;">hvigorfile.ts</span><svg style="left:85px;top:768px;" width="14" height="17" viewBox="0 0 14 17"><path d="M4.7 0H10.3V14H0V5H4.7Z" fill="#9aa7b0"/><path d="M3.7 0.6V4H0.2Z" fill="#9aa7b0"/><path d="M3.4 7H14V17H3.4Z" fill="#3c3f41"/><text x="8.4" y="14.6" font-size="10" font-weight="bold" text-anchor="middle" fill="#aab3b9" font-family="Liberation Sans,sans-serif" letter-spacing="-.6">{}</text><path d="M8.1 9V14" stroke="#aab3b9" stroke-width="1.2"/></svg><span class="t" style="letter-spacing:0.332px;top:765.5px;height:20px;line-height:20px;font-size:12.5px;color:#bbbbbb;left:101px;">oh-package.json5</span><svg style="left:48.5px;top:790px;" width="7" height="10" viewBox="0 0 7 10"><path d="M0.8 0.8L5.2 5L0.8 9.2" fill="none" stroke="#a6a8aa" stroke-width="1.3"/></svg><svg style="left:65px;top:788.5px;" width="15" height="14" viewBox="0 0 15 14"><path d="M0 0H5.2L6.6 2H14V11H0Z" fill="#8a98a3"/></svg><span class="t" style="top:785.5px;height:20px;line-height:20px;font-size:12.5px;color:#bbbbbb;left:83px;letter-spacing:0.3px;">hvigor</span><div style="left:22px;top:805px;width:318px;height:20px;background:#4d4a40;"></div><svg style="left:48.5px;top:810px;" width="7" height="10" viewBox="0 0 7 10"><path d="M0.8 0.8L5.2 5L0.8 9.2" fill="none" stroke="#a6a8aa" stroke-width="1.3"/></svg><svg style="left:65px;top:808.5px;" width="15" height="14" viewBox="0 0 15 14"><path d="M0 0H5.2L6.6 2H14V11H0Z" fill="#c0622d"/></svg><span class="t" style="top:805.5px;height:20px;line-height:20px;font-size:12.5px;color:#bbbbbb;left:83px;letter-spacing:0.3px;">oh_modules</span><span class="t" style="letter-spacing:0.264px;top:85.5px;height:20px;line-height:20px;font-size:12.5px;color:#7d8083;left:161.5px;">E:\HarmonyOS\MyApplicatio</span><div style="left:331px;top:85px;width:8px;height:571px;background:rgba(128,128,128,0.48);"></div><div style="left:340px;top:58px;width:1px;height:769px;background:#323232;"></div><div style="left:22px;top:826px;width:319px;height:1px;background:#323232;"></div><div style="left:341px;top:85px;width:845px;height:717px;background:#2b2b2b;"></div><div style="left:341px;top:85px;width:58px;height:717px;background:#313335;"></div><div style="left:341px;top:758px;width:58px;height:22px;background:#35373a;"></div><div style="left:400px;top:758px;width:786px;height:22px;background:#323232;"></div><div style="left:389px;top:85px;width:1px;height:695px;background:#5b8a80;"></div><div style="left:399px;top:85px;width:1px;height:717px;background:#5a5a5a;"></div><div style="left:419px;top:98px;width:1px;height:638px;background:#3b3b3b;"></div><div style="left:435px;top:120px;width:1px;height:594px;background:#3b3b3b;"></div><div style="left:451px;top:142px;width:1px;height:44px;background:#3b3b3b;"></div><div style="left:451px;top:362px;width:1px;height:330px;background:#3b3b3b;"></div><div style="left:468px;top:406px;width:1px;height:286px;background:#3b3b3b;"></div><div style="left:484px;top:428px;width:1px;height:22px;background:#3b3b3b;"></div><div style="left:484px;top:516px;width:1px;height:66px;background:#3b3b3b;"></div><div style="left:484px;top:626px;width:1px;height:44px;background:#3b3b3b;"></div><svg style="left:394.5px;top:83px;" width="10" height="12" viewBox="0 0 10 12"><path d="M0.5 0.5H8.5V6.5L4.5 10.8L0.5 6.5Z" fill="#2b2b2b" stroke="#606366" stroke-width="1"/><path d="M2.5 4.5H6.5" stroke="#606366" stroke-width="1"/></svg><svg style="left:394.5px;top:105px;" width="10" height="12" viewBox="0 0 10 12"><path d="M0.5 0.5H8.5V6.5L4.5 10.8L0.5 6.5Z" fill="#2b2b2b" stroke="#606366" stroke-width="1"/><path d="M2.5 4.5H6.5" stroke="#606366" stroke-width="1"/></svg><svg style="left:394.5px;top:127px;" width="10" height="12" viewBox="0 0 10 12"><path d="M0.5 0.5H8.5V6.5L4.5 10.8L0.5 6.5Z" fill="#2b2b2b" stroke="#606366" stroke-width="1"/><path d="M2.5 4.5H6.5" stroke="#606366" stroke-width="1"/></svg><svg style="left:394.5px;top:413px;" width="10" height="12" viewBox="0 0 10 12"><path d="M0.5 0.5H8.5V6.5L4.5 10.8L0.5 6.5Z" fill="#2b2b2b" stroke="#606366" stroke-width="1"/><path d="M2.5 4.5H6.5" stroke="#606366" stroke-width="1"/></svg><svg style="left:394.5px;top:501px;" width="10" height="12" viewBox="0 0 10 12"><path d="M0.5 0.5H8.5V6.5L4.5 10.8L0.5 6.5Z" fill="#2b2b2b" stroke="#606366" stroke-width="1"/><path d="M2.5 4.5H6.5" stroke="#606366" stroke-width="1"/></svg><svg style="left:394.5px;top:611px;" width="10" height="12" viewBox="0 0 10 12"><path d="M0.5 0.5H8.5V6.5L4.5 10.8L0.5 6.5Z" fill="#2b2b2b" stroke="#606366" stroke-width="1"/><path d="M2.5 4.5H6.5" stroke="#606366" stroke-width="1"/></svg><svg style="left:394.5px;top:189px;" width="10" height="12" viewBox="0 0 10 12"><path d="M0.5 11.5H8.5V5.5L4.5 1.2L0.5 5.5Z" fill="#2b2b2b" stroke="#606366" stroke-width="1"/><path d="M2.5 7.5H6.5" stroke="#606366" stroke-width="1"/></svg><svg style="left:394.5px;top:453px;" width="10" height="12" viewBox="0 0 10 12"><path d="M0.5 11.5H8.5V5.5L4.5 1.2L0.5 5.5Z" fill="#2b2b2b" stroke="#606366" stroke-width="1"/><path d="M2.5 7.5H6.5" stroke="#606366" stroke-width="1"/></svg><svg style="left:394.5px;top:585px;" width="10" height="12" viewBox="0 0 10 12"><path d="M0.5 11.5H8.5V5.5L4.5 1.2L0.5 5.5Z" fill="#2b2b2b" stroke="#606366" stroke-width="1"/><path d="M2.5 7.5H6.5" stroke="#606366" stroke-width="1"/></svg><svg style="left:394.5px;top:673px;" width="10" height="12" viewBox="0 0 10 12"><path d="M0.5 11.5H8.5V5.5L4.5 1.2L0.5 5.5Z" fill="#2b2b2b" stroke="#606366" stroke-width="1"/><path d="M2.5 7.5H6.5" stroke="#606366" stroke-width="1"/></svg><svg style="left:394.5px;top:717px;" width="10" height="12" viewBox="0 0 10 12"><path d="M0.5 11.5H8.5V5.5L4.5 1.2L0.5 5.5Z" fill="#2b2b2b" stroke="#606366" stroke-width="1"/><path d="M2.5 7.5H6.5" stroke="#606366" stroke-width="1"/></svg><svg style="left:394.5px;top:739px;" width="10" height="12" viewBox="0 0 10 12"><path d="M0.5 11.5H8.5V5.5L4.5 1.2L0.5 5.5Z" fill="#2b2b2b" stroke="#606366" stroke-width="1"/><path d="M2.5 7.5H6.5" stroke="#606366" stroke-width="1"/></svg><svg style="left:394.5px;top:761px;" width="10" height="12" viewBox="0 0 10 12"><path d="M0.5 11.5H8.5V5.5L4.5 1.2L0.5 5.5Z" fill="#2b2b2b" stroke="#606366" stroke-width="1"/><path d="M2.5 7.5H6.5" stroke="#606366" stroke-width="1"/></svg><span class="code" style="left:346px;top:78px;color:#606366;width:16px;text-align:right;">10</span><span class="code" style="left:346px;top:100px;color:#606366;width:16px;text-align:right;">11</span><span class="code" style="left:346px;top:122px;color:#606366;width:16px;text-align:right;">12</span><span class="code" style="left:346px;top:144px;color:#606366;width:16px;text-align:right;">13</span><span class="code" style="left:346px;top:166px;color:#606366;width:16px;text-align:right;">14</span><span class="code" style="left:346px;top:188px;color:#606366;width:16px;text-align:right;">15</span><span class="code" style="left:346px;top:210px;color:#606366;width:16px;text-align:right;">16</span><span class="code" style="left:346px;top:232px;color:#606366;width:16px;text-align:right;">17</span><span class="code" style="left:346px;top:254px;color:#606366;width:16px;text-align:right;">18</span><span class="code" style="left:346px;top:276px;color:#606366;width:16px;text-align:right;">19</span><span class="code" style="left:346px;top:298px;color:#606366;width:16px;text-align:right;">20</span><span class="code" style="left:346px;top:320px;color:#606366;width:16px;text-align:right;">21</span><span class="code" style="left:346px;top:342px;color:#606366;width:16px;text-align:right;">22</span><span class="code" style="left:346px;top:364px;color:#606366;width:16px;text-align:right;">23</span><span class="code" style="left:346px;top:386px;color:#606366;width:16px;text-align:right;">24</span><span class="code" style="left:346px;top:408px;color:#606366;width:16px;text-align:right;">25</span><span class="code" style="left:346px;top:430px;color:#606366;width:16px;text-align:right;">26</span><span class="code" style="left:346px;top:452px;color:#606366;width:16px;text-align:right;">27</span><span class="code" style="left:346px;top:474px;color:#606366;width:16px;text-align:right;">28</span><span class="code" style="left:346px;top:496px;color:#606366;width:16px;text-align:right;">29</span><span class="code" style="left:346px;top:518px;color:#606366;width:16px;text-align:right;">30</span><span class="code" style="left:346px;top:540px;color:#606366;width:16px;text-align:right;">31</span><span class="code" style="left:346px;top:562px;color:#606366;width:16px;text-align:right;">32</span><span class="code" style="left:346px;top:584px;color:#606366;width:16px;text-align:right;">33</span><span class="code" style="left:346px;top:606px;color:#606366;width:16px;text-align:right;">34</span><span class="code" style="left:346px;top:628px;color:#606366;width:16px;text-align:right;">35</span><span class="code" style="left:346px;top:650px;color:#606366;width:16px;text-align:right;">36</span><span class="code" style="left:346px;top:672px;color:#606366;width:16px;text-align:right;">37</span><span class="code" style="left:346px;top:694px;color:#606366;width:16px;text-align:right;">38</span><span class="code" style="left:346px;top:716px;color:#606366;width:16px;text-align:right;">39</span><span class="code" style="left:346px;top:738px;color:#606366;width:16px;text-align:right;">40</span><span class="code" style="left:346px;top:760px;color:#a4a3a3;width:16px;text-align:right;">41</span><div style="left:405px;top:758px;width:8px;height:22px;background:#3b514d;"></div><span class="code" style="left:421px;top:78px;"><span class="f">build</span><span class="p2">()</span> <span class="p1">{</span></span><span class="code" style="left:437px;top:100px;"><span class="f">Column</span><span class="p2">()</span> <span class="p1">{</span></span><span class="code" style="left:453px;top:122px;"><span class="f">Column</span><span class="p2">()</span> <span class="p1">{</span></span><span class="code" style="left:469px;top:144px;"><span class="f">Text</span><span class="p2">(</span><span class="s">&#x27;PinchGesture scale:</span><span class="k">\n</span><span class="s">&#x27;</span><span class="o"> + </span><span class="k">this</span>.scaleValue<span class="p2">)</span></span><span class="code" style="left:469px;top:166px;"><span class="f">Text</span><span class="p2">(</span><span class="s">&#x27;PinchGesture center:</span><span class="k">\n</span><span class="s">(&#x27;</span><span class="o"> + </span><span class="k">this</span>.pinchX<span class="o"> + </span><span class="s">&#x27;,&#x27;</span><span class="o"> + </span><span class="k">this</span>.pinchY<span class="o"> + </span><span class="s">&#x27;)&#x27;</span><span class="p2">)</span></span><span class="code" style="left:453px;top:188px;"><span class="p1">}</span></span><span class="code" style="left:453px;top:210px;"><span class="o">.</span><span class="f">height</span><span class="p2">(</span><span class="n">200</span><span class="p2">)</span></span><span class="code" style="left:453px;top:232px;"><span class="o">.</span><span class="f">width</span><span class="p2">(</span><span class="n">300</span><span class="p2">)</span></span><span class="code" style="left:453px;top:254px;"><span class="o">.</span><span class="f">border</span><span class="p2">(</span><span class="p1">{</span> width<span class="o">:</span> <span class="n">3</span> <span class="p1">}</span><span class="p2">)</span></span><span class="code" style="left:453px;top:276px;"><span class="o">.</span><span class="f">margin</span><span class="p2">(</span><span class="p1">{</span> top<span class="o">:</span> <span class="n">100</span> <span class="p1">}</span><span class="p2">)</span></span><span class="code" style="left:453px;top:298px;"><span class="c">// <i>在组件上绑定缩放比例，可以通过修改缩放比例来实现组件的缩小或者放大</i></span></span><span class="code" style="left:453px;top:320px;"><span class="o">.</span><span class="f">scale</span><span class="p2">(</span><span class="p1">{</span> x<span class="o">:</span> <span class="k">this</span>.scaleValue<span class="o">,</span> y<span class="o">:</span> <span class="k">this</span>.scaleValue<span class="o">,</span> z<span class="o">:</span> <span class="n">1</span> <span class="p1">}</span><span class="p2">)</span></span><span class="code" style="left:453px;top:342px;"><span class="o">.</span><span class="f">gesture</span><span class="p3">(</span></span><span class="code" style="left:469px;top:364px;"><span class="c">// <i>在组件上绑定三指触发的捏合手势</i></span></span><span class="code" style="left:469px;top:386px;"><span class="f">PinchGesture</span><span class="p2">(</span><span class="p1">{</span> fingers<span class="o">:</span> <span class="n">3</span> <span class="p1">}</span><span class="p2">)</span></span><span class="code" style="left:485px;top:408px;"><span class="o">.</span><span class="f">onActionStart</span><span class="p2">((</span><span class="g">event</span><span class="o">:</span> <span class="ty">GestureEvent</span><span class="p2">)</span> <span class="o">=&gt;</span> <span class="p1">{</span></span><span class="code" style="left:501px;top:430px;">console<span class="o">.</span><span class="f">info</span><span class="p2">(</span><span class="s">&#x27;Pinch start&#x27;</span><span class="p2">)</span><span class="o">;</span></span><span class="code" style="left:485px;top:452px;"><span class="p1">}</span><span class="p2">)</span></span><span class="code" style="left:501px;top:474px;"><span class="c">// <i>当捏合手势触发时，可以通过回调函数获取缩放比例，从而修改组件的缩放比例</i></span></span><span class="code" style="left:485px;top:496px;"><span class="o">.</span><span class="f">onActionUpdate</span><span class="p2">((</span>event<span class="o">:</span> <span class="ty">GestureEvent</span><span class="p2">)</span> <span class="o">=&gt;</span> <span class="p1">{</span></span><span class="code" style="left:501px;top:518px;"><span class="k">this</span>.scaleValue<span class="o"> = </span><span class="k">this</span>.pinchValue<span class="o"> * </span>event.scale<span class="o">;</span></span><span class="code" style="left:501px;top:540px;"><span class="k">this</span>.pinchX<span class="o"> = </span>event.pinchCenterX<span class="o">;</span></span><span class="code" style="left:501px;top:562px;"><span class="k">this</span>.pinchY<span class="o"> = </span>event.pinchCenterY<span class="o">;</span></span><span class="code" style="left:485px;top:584px;"><span class="p1">}</span><span class="p2">)</span></span><span class="code" style="left:485px;top:606px;"><span class="o">.</span><span class="f">onActionEnd</span><span class="p2">(()</span> <span class="o">=&gt;</span> <span class="p1">{</span></span><span class="code" style="left:501px;top:628px;"><span class="k">this</span>.pinchValue<span class="o"> = </span><span class="k">this</span>.scaleValue<span class="o">;</span></span><span class="code" style="left:501px;top:650px;">console<span class="o">.</span><span class="f">info</span><span class="p2">(</span><span class="s">&#x27;Pinch end&#x27;</span><span class="p2">)</span><span class="o">;</span></span><span class="code" style="left:485px;top:672px;"><span class="p1">}</span><span class="p2">)</span></span><span class="code" style="left:453px;top:694px;"><span class="p3">)</span></span><span class="code" style="left:437px;top:716px;"><span class="p1">}</span></span><span class="code" style="left:421px;top:738px;"><span class="p1">}</span></span><span class="code" style="left:405px;top:760px;color:#ffef28;">}</span><div style="left:341px;top:58px;width:845px;height:26px;background:#3c3f41;"></div><div style="left:341px;top:58px;width:103px;height:27px;background:#4e5254;"></div><div style="left:341px;top:82px;width:103px;height:3px;background:#747a80;"></div><svg style="left:350px;top:63.8px;" width="15" height="16" viewBox="0 0 15 16"><path d="M7.1 0H12.1V7.2H1.9V5H7.1Z" fill="#9aa7b0"/><path d="M6 0.6V4H2.1Z" fill="#9aa7b0"/><rect x="0" y="8.2" width="14.3" height="7.1" fill="#3f9fc5"/><text x="7.15" y="14.3" font-size="6.6" font-weight="bold" text-anchor="middle" fill="#263238" font-family="Liberation Sans,sans-serif" letter-spacing=".3">ETS</text></svg><span class="t" style="letter-spacing:0.085px;top:61.5px;height:20px;line-height:20px;font-size:12.5px;color:#bbbbbb;left:369.5px;">Index.ets</span><svg style="left:428px;top:67px;" width="8" height="8" viewBox="0 0 8 8"><path d="M0.5 0.5L7.5 7.5M7.5 0.5L0.5 7.5" stroke="#7d8082" stroke-width="1"/></svg><div style="left:1171.5px;top:64.7px;width:3px;height:3px;border-radius:50%;background:#afb1b3;"></div><div style="left:1171.5px;top:69.2px;width:3px;height:3px;border-radius:50%;background:#afb1b3;"></div><div style="left:1171.5px;top:73.7px;width:3px;height:3px;border-radius:50%;background:#afb1b3;"></div><div style="left:1176px;top:253px;width:8px;height:488px;background:#4e4e4e;"></div><div style="left:1172px;top:470px;width:12px;height:2px;background:#be9117;"></div><svg style="left:1115px;top:91.8px;" width="12" height="12" viewBox="0 0 12 12"><path d="M6 0.6L11.8 11.2H0.2Z" fill="#d0a21c"/><path d="M6 4.2V7.6" stroke="#2b2b2b" stroke-width="1.4"/><circle cx="6" cy="9.3" r=".8" fill="#2b2b2b"/></svg><span class="t" style="top:88.5px;height:20px;line-height:20px;font-size:12px;color:#bbbbbb;left:1130.5px;">1</span><svg style="left:1147px;top:94.5px;" width="10" height="7" viewBox="0 0 10 7"><path d="M1 5.5L5 1.5L9 5.5" fill="none" stroke="#afb1b3" stroke-width="1.4"/></svg><svg style="left:1168px;top:94.5px;" width="10" height="7" viewBox="0 0 10 7"><path d="M1 1.5L5 5.5L9 1.5" fill="none" stroke="#afb1b3" stroke-width="1.4"/></svg><div style="left:341px;top:802px;width:845px;height:1px;background:#5a5a5a;"></div><div style="left:341px;top:803px;width:845px;height:24px;background:#313335;"></div><span class="t" style="letter-spacing:0.381px;top:805.5px;height:20px;line-height:20px;font-size:12.5px;color:#bbbbbb;left:351px;">Index</span><div style="left:1185px;top:58px;width:1px;height:27px;background:#2b2b2b;"></div><div style="left:1186px;top:58px;width:710px;height:26px;background:#3b4754;"></div><div style="left:1186px;top:84px;width:710px;height:1px;background:#2e3036;"></div><div style="left:1186px;top:85px;width:710px;height:32px;background:#3a3e48;"></div><div style="left:1186px;top:117px;width:710px;height:710px;background:#33363f;"></div><span class="t" style="letter-spacing:-0.005px;top:61.5px;height:20px;line-height:20px;font-size:12px;color:#bbbbbb;left:1192px;">预览器</span><svg style="left:1764.2px;top:64.3px;" width="16" height="13.2" viewBox="0 0 17 14"><path d="M0.5 1.5H9.5M5 1.5V13" stroke="#b6b9bd" stroke-width="2" fill="none"/><path d="M9.5 6H16M12.7 6V13" stroke="#b6b9bd" stroke-width="1.8" fill="none"/></svg><svg style="left:1791.5px;top:64.6px;" width="13" height="13" viewBox="0 0 15 15"><path d="M12.6 5.2A5.6 5.6 0 0 0 2.2 5.8" fill="none" stroke="#b6b9bd" stroke-width="1.6"/><path d="M13.8 1.2V5.8H9.2Z" fill="#b6b9bd"/><path d="M2.4 9.8A5.6 5.6 0 0 0 12.8 9.2" fill="none" stroke="#b6b9bd" stroke-width="1.6"/><path d="M1.2 13.8V9.2H5.8Z" fill="#b6b9bd"/></svg><svg style="left:1817px;top:64px;" width="14" height="14.5" viewBox="0 0 16 17"><path d="M1 4.5H15" stroke="#b6b9bd" stroke-width="1.6"/><path d="M3 5H13V7.5A5 4.6 0 0 1 3 7.5Z" fill="#b6b9bd"/><path d="M5 1V4M11 1V4" stroke="#b6b9bd" stroke-width="1.6"/><path d="M8 12C8 15.5 12 15 12.5 13" stroke="#b6b9bd" stroke-width="1.3" fill="none"/></svg><div style="left:1840px;top:62px;width:1px;height:18px;background:#55606c;"></div><svg style="left:1849px;top:63.2px;" width="16" height="16" viewBox="0 0 16 16"><g transform="translate(8 8)"><path d="M1.82 -3.90L1.23 -5.77L-1.23 -5.77L-1.82 -3.90L-2.47 -3.52L-4.38 -3.95L-5.61 -1.82L-4.28 -0.37L-4.28 0.37L-5.61 1.82L-4.38 3.95L-2.47 3.52L-1.82 3.90L-1.23 5.77L1.23 5.77L1.82 3.90L2.47 3.52L4.38 3.95L5.61 1.82L4.28 0.37L4.28 -0.37L5.61 -1.82L4.38 -3.95L2.47 -3.52ZM2.6 0A2.6 2.6 0 1 0 -2.6 0A2.6 2.6 0 1 0 2.6 0Z" fill="#b6b9bd" fill-rule="evenodd" stroke="#b6b9bd" stroke-width="1" stroke-linejoin="round"/></g></svg><div style="left:1876.5px;top:70.2px;width:12.5px;height:1.8px;background:#b6b9bd;"></div><span class="t" style="letter-spacing:0.057px;top:91.0px;height:20px;line-height:20px;font-size:14.5px;color:#f0f0f0;left:1202px;">entry : /pages/Index</span><div style="left:1636px;top:90px;width:50px;height:22px;box-sizing:border-box;border:1px solid #2a2d34;border-radius:3px;background:#3a3e48;"></div><div style="left:1637px;top:91px;width:24px;height:20px;background:#2f3441;border-radius:2px 0 0 2px;"></div><svg style="left:1643px;top:94.8px;" width="12.5" height="12.5" viewBox="0 0 16 16"><path d="M1 4.5V1H4.5M11.5 1H15V4.5M15 11.5V15H11.5M4.5 15H1V11.5" fill="none" stroke="#2f7cf6" stroke-width="1.4"/><path d="M2.6 8C4.5 4.6 11.5 4.6 13.4 8C11.5 11.4 4.5 11.4 2.6 8Z" fill="none" stroke="#2f7cf6" stroke-width="1.4"/><circle cx="8" cy="8" r="1.7" fill="#2f7cf6"/></svg><svg style="left:1666.5px;top:94.6px;" width="13" height="13" viewBox="0 0 16 16"><path d="M8 1.5L15 5L8 8.5L1 5Z" fill="#b6b9bd"/><path d="M1.5 8L8 11.2L14.5 8M1.5 11L8 14.2L14.5 11" fill="none" stroke="#b6b9bd" stroke-width="1.3"/></svg><div style="left:1704px;top:90px;width:50px;height:22px;box-sizing:border-box;border:1px solid #2a2d34;border-radius:3px;background:#3a3e48;"></div><svg style="left:1710.8px;top:95.3px;" width="12.2" height="12.2" viewBox="0 0 14 14"><rect x="0.5" y="1" width="5" height="5" rx="1" fill="#b6b9bd"/><rect x="0.5" y="8" width="5" height="5" rx="1" fill="#b6b9bd"/><rect x="8" y="8" width="5" height="5" rx="1" fill="#b6b9bd"/><path d="M10.5 0L13.6 3.5L10.5 7L7.4 3.5Z" fill="#b6b9bd"/></svg><svg style="left:1736px;top:98.7px;" width="10" height="6.5" viewBox="0 0 11 7"><path d="M0.5 0.5H10.5L5.5 6.5Z" fill="#b6b9bd"/></svg><svg style="left:1770px;top:95px;" width="12" height="12" viewBox="0 0 12 12"><rect x="1.6" y="1.6" width="8.8" height="8.8" fill="none" stroke="#a9acb1" stroke-width="1.1"/><rect x="0.3" y="0.3" width="2.4" height="2.4" fill="#a9acb1"/><rect x="9.3" y="0.3" width="2.4" height="2.4" fill="#a9acb1"/><rect x="0.3" y="9.3" width="2.4" height="2.4" fill="#a9acb1"/><rect x="9.3" y="9.3" width="2.4" height="2.4" fill="#a9acb1"/></svg><svg style="left:1794.6px;top:95.3px;" width="13.6" height="13.6" viewBox="0 0 16 16"><circle cx="7" cy="7" r="5.6" fill="none" stroke="#b6b9bd" stroke-width="1.2"/><path d="M4.2 7H9.8M11 11L14.5 14.5" stroke="#b6b9bd" stroke-width="1.2"/></svg><svg style="left:1820.6px;top:95.3px;" width="13.6" height="13.6" viewBox="0 0 16 16"><circle cx="7" cy="7" r="5.6" fill="none" stroke="#b6b9bd" stroke-width="1.2"/><path d="M4.2 7H9.8M7 4.2V9.8M11 11L14.5 14.5" stroke="#b6b9bd" stroke-width="1.2"/></svg><svg style="left:1845.6px;top:95px;" width="12.4" height="12.4" viewBox="0 0 14 14"><rect x="0.7" y="0.7" width="12.6" height="12.6" rx="1.2" fill="none" stroke="#b6b9bd" stroke-width="1.3"/><path d="M3.5 7V3.5H7M10.5 7V10.5H7" fill="none" stroke="#b6b9bd" stroke-width="1.3"/></svg><span class="t" style="letter-spacing:-1.193px;top:91.3px;height:20px;line-height:20px;font-size:13px;color:#a9acb1;left:1869.7px;transform:scaleY(1.2);">1:1</span><svg style="left:1468px;top:150px;" width="22" height="13" viewBox="0 0 22 13"><rect x="1" y="1" width="20" height="11" rx="2" fill="none" stroke="#1280ff" stroke-width="1.6"/><path d="M4.5 4H8.5M6.5 4V9" stroke="#1280ff" stroke-width="1.1" fill="none"/></svg><span class="t" style="letter-spacing:0.098px;top:147.0px;height:20px;line-height:20px;font-size:14.5px;color:#ffffff;left:1497.5px;">Tablet (large)</span><div style="left:1479px;top:177px;width:122px;height:32px;background:#3d414b;border-radius:1px;box-shadow:0 1px 7px rgba(0,0,0,0.28);"></div><div style="left:1519px;top:177px;width:1px;height:32px;background:#4a4e58;"></div><div style="left:1560px;top:177px;width:1px;height:32px;background:#4a4e58;"></div><svg style="left:1490px;top:184px;" width="18" height="18" viewBox="0 0 18 18"><path d="M16 1.5V16.5L2 9Z" fill="none" stroke="#7c7d80" stroke-width="1.3" stroke-linejoin="round"/></svg><svg style="left:1530px;top:183px;" width="21" height="19" viewBox="0 0 21 19"><rect x="1" y="1.5" width="9" height="16" rx="2" fill="none" stroke="#7c7d80" stroke-width="1.3"/><path d="M5 14.5H6" stroke="#7c7d80" stroke-width="1.3"/><path d="M12 8.5H17.5A2 2 0 0 1 19.5 10.5V15.5A2 2 0 0 1 17.5 17.5H12" fill="none" stroke="#7c7d80" stroke-width="1.3"/></svg><div style="left:1572px;top:192px;width:3px;height:3px;border-radius:50%;background:#8d9199;"></div><div style="left:1579px;top:192px;width:3px;height:3px;border-radius:50%;background:#8d9199;"></div><div style="left:1586px;top:192px;width:3px;height:3px;border-radius:50%;background:#8d9199;"></div><div style="left:1302px;top:237px;width:87px;height:12px;border-radius:6px 6px 0 0;background:#1d1d1d;"></div><div style="left:1239px;top:282px;width:12px;height:53px;border-radius:6px 0 0 6px;background:#1d1d1d;"></div><div style="left:1246px;top:244px;width:589px;height:380px;border-radius:12px;background:#1c1c1c;"></div><div style="left:1540px;top:244px;width:152px;height:16px;background:linear-gradient(90deg,rgba(28,28,28,0),#5a5a5a 35%,#8f8f8f 50%,#5a5a5a 65%,rgba(28,28,28,0));"></div><div style="left:1380px;top:609px;width:170px;height:15px;background:linear-gradient(90deg,rgba(28,28,28,0),#4a4a4a 35%,#7c7c7c 50%,#4a4a4a 65%,rgba(28,28,28,0));"></div><div style="left:1262px;top:260px;width:559px;height:349px;background:#ffffff;"></div><div style="left:1263px;top:315px;width:163px;height:108px;box-sizing:border-box;border:2px solid #0a0a0a;background:#fff;"></div><span class="t" style="letter-spacing:0.337px;top:316.5px;height:10px;line-height:10px;font-size:8px;color:#3a3a3a;left:1304.5px;">PinchGesture scale:</span><span class="t" style="top:326.5px;height:10px;line-height:10px;font-size:8px;color:#3a3a3a;left:1304.5px;">1</span><span class="t" style="letter-spacing:0.492px;top:337.0px;height:10px;line-height:10px;font-size:8px;color:#3a3a3a;left:1301.5px;">PinchGesture center:</span><span class="t" style="letter-spacing:0.309px;top:347.0px;height:10px;line-height:10px;font-size:8px;color:#3a3a3a;left:1301px;">(0,0)</span><div style="left:1260px;top:308px;width:174px;height:133px;box-sizing:border-box;border:3px solid #ff2116;border-radius:3.5px;"></div><div style="left:1599px;top:333px;width:116px;height:78px;box-sizing:border-box;border:3px solid #ff2116;border-radius:3.5px;"></div><svg style="left:1463px;top:379px;" width="110" height="16" viewBox="0 0 110 16"><path d="M2 8L99 5.6L96 1L107.5 8L96 14.7L99 10.4Z" fill="#ff2116"/></svg><svg style="left:1274px;top:458px;" width="44" height="16" viewBox="0 0 44 16"><path d="M1.7 8.5L31.6 5.8L29.2 1.4L41 8L29.2 14.8L31.6 11.2Z" fill="#ff2116"/></svg><svg style="left:1364px;top:456px;" width="58" height="16" viewBox="0 0 58 16"><path d="M3.4 9L14.7 2.1L11.7 6L56.3 7.2L11.7 11.5L14.7 14.9Z" fill="#ff2116"/></svg><span class="t" style="top:421.0px;height:26px;line-height:26px;font-size:22px;color:#ff2116;left:1507px;">变</span><span class="t" style="letter-spacing:0.250px;top:491.5px;height:26px;line-height:26px;font-size:21px;color:#ff2116;left:1309.5px;">捏合</span><div style="left:1896px;top:58px;width:22px;height:769px;background:#3c3f41;"></div><div style="left:1895px;top:58px;width:1px;height:769px;background:#323232;"></div><svg style="left:1901px;top:67px;" width="14" height="15" viewBox="0 0 14 15"><path d="M6.3 3A4.1 4.1 0 0 1 10.4 7.1V10.5L11.8 12.4H0.8L2.2 10.5V7.1A4.1 4.1 0 0 1 6.3 3Z" fill="#afb1b3"/><path d="M4.8 13.3A1.6 1.6 0 0 0 7.8 13.3Z" fill="#afb1b3"/><circle cx="10.3" cy="4.2" r="3" fill="#3c3f41"/><circle cx="10.3" cy="4.2" r="2.2" fill="#3592c4"/></svg><span class="t" style="top:113.0px;height:16px;line-height:16px;font-size:12.5px;color:#bbbbbb;left:1807.0px;width:200px;text-align:center;transform:rotate(90deg);transform-origin:50% 50%;">Notifications</span><div style="left:1896px;top:165px;width:22px;height:70px;background:#2d2f30;"></div><svg style="left:1900.5px;top:176.8px;" width="14" height="9.4" viewBox="0 0 14 9.4"><path d="M0 4.7C3 -1.2 11 -1.2 14 4.7C11 10.6 3 10.6 0 4.7Z" fill="#b4b4b4"/><circle cx="7" cy="4.7" r="2.6" fill="#2d2f30"/><circle cx="7" cy="4.7" r="1.3" fill="#b4b4b4"/></svg><span class="t" style="top:200.0px;height:16px;line-height:16px;font-size:12px;color:#e8e8e8;left:1807.0px;width:200px;text-align:center;transform:rotate(90deg);transform-origin:50% 50%;">预览器</span><div style="left:0px;top:826px;width:341px;height:1px;background:#323232;"></div><div style="left:0px;top:827px;width:1918px;height:22px;background:#3c3f41;"></div><div style="left:0px;top:849px;width:1918px;height:1px;background:#4a4d4f;"></div><div style="left:0px;top:850px;width:1918px;height:21px;background:#3c3f41;"></div><svg style="left:33px;top:832px;" width="10" height="13" viewBox="0 0 10 13"><path d="M2.5 1V12M2.5 8.5C7.5 8.5 7.5 6 7.5 3.5" fill="none" stroke="#afb1b3" stroke-width="1.7"/><circle cx="2.5" cy="2" r="1.9" fill="#afb1b3"/><circle cx="7.5" cy="3" r="1.9" fill="#afb1b3"/></svg><span class="t" style="letter-spacing:-0.500px;top:829.0px;height:20px;line-height:20px;font-size:11.5px;color:#bbbbbb;left:50px;">版本控制</span><svg style="left:114px;top:833px;" width="9" height="11" viewBox="0 0 9 11"><path d="M0.5 0.5L8.5 5.5L0.5 10.5Z" fill="#afb1b3"/></svg><span class="t" style="letter-spacing:-0.479px;top:829.0px;height:20px;line-height:20px;font-size:12.5px;color:#bbbbbb;left:130px;">Run</span><svg style="left:171.5px;top:833.5px;" width="11" height="10" viewBox="0 0 11 10"><path d="M0 1.5H2M3.5 1.5H11M0 5H2M3.5 5H11M0 8.5H2M3.5 8.5H11" stroke="#afb1b3" stroke-width="1.8"/></svg><span class="t" style="letter-spacing:-0.973px;top:829.0px;height:20px;line-height:20px;font-size:12.5px;color:#bbbbbb;left:187px;">TODO</span><svg style="left:238px;top:832px;" width="12" height="13" viewBox="0 0 12 13"><rect x="0.8" y="2" width="10.4" height="10.2" fill="none" stroke="#afb1b3" stroke-width="1.6"/><path d="M3 0.5V3M9 0.5V3" stroke="#afb1b3" stroke-width="1.6"/><path d="M3 6H9M3 9H7.5" stroke="#afb1b3" stroke-width="1.4"/></svg><span class="t" style="letter-spacing:-0.500px;top:829.0px;height:20px;line-height:20px;font-size:11.5px;color:#bbbbbb;left:255px;">日志</span><svg style="left:295.5px;top:833px;" width="11" height="11" viewBox="0 0 11 11"><circle cx="5.5" cy="5.5" r="5.3" fill="#afb1b3"/><path d="M5.5 2.4V6.3" stroke="#3c3f41" stroke-width="1.6"/><circle cx="5.5" cy="8.3" r=".95" fill="#3c3f41"/></svg><span class="t" style="letter-spacing:-0.500px;top:829.0px;height:20px;line-height:20px;font-size:11.5px;color:#bbbbbb;left:312px;">问题</span><svg style="left:352.5px;top:832.3px;" width="12" height="11" viewBox="0 0 12 11"><rect x="0" y="0" width="12" height="11" rx="1" fill="#afb1b3"/><path d="M2.3 2.8L5 5.3L2.3 7.8M6 8.4H9.6" fill="none" stroke="#3c3f41" stroke-width="1.3"/></svg><span class="t" style="letter-spacing:-0.250px;top:829.0px;height:20px;line-height:20px;font-size:11.5px;color:#bbbbbb;left:368px;">终端</span><svg style="left:409px;top:831.8px;" width="12" height="12" viewBox="0 0 12 12"><path d="M3.5 0.5H8.5L11.5 3.5V8.5L8.5 11.5H3.5L0.5 8.5V3.5Z" fill="#afb1b3"/><path d="M4.5 3.2L8.6 6L4.5 8.8Z" fill="#3c3f41"/></svg><span class="t" style="letter-spacing:-0.750px;top:829.0px;height:20px;line-height:20px;font-size:11.5px;color:#bbbbbb;left:425.5px;">服务</span><svg style="left:466px;top:832px;" width="15" height="11" viewBox="0 0 15 11"><path d="M1.2 10A6.3 6.3 0 0 1 12 4.2" fill="none" stroke="#afb1b3" stroke-width="1.7"/><path d="M13.4 6.2A6.3 6.3 0 0 1 13.8 10" fill="none" stroke="#afb1b3" stroke-width="1.7"/><path d="M7 9.5L11.5 3.5" stroke="#afb1b3" stroke-width="1.6"/></svg><span class="t" style="letter-spacing:-0.199px;top:829.0px;height:20px;line-height:20px;font-size:12.5px;color:#bbbbbb;left:486px;">Profiler</span><svg style="left:545.5px;top:831.3px;" width="14" height="14" viewBox="0 0 14 14"><circle cx="6" cy="6" r="4.8" fill="none" stroke="#afb1b3" stroke-width="1.9"/><path d="M9.6 9.6L13 13" stroke="#afb1b3" stroke-width="2.2"/><path d="M4.6 4.6L3.4 6L4.6 7.4M7.4 4.6L8.6 6L7.4 7.4M6.5 4.2L5.5 7.8" fill="none" stroke="#afb1b3" stroke-width=".9"/></svg><span class="t" style="letter-spacing:-0.420px;top:829.0px;height:20px;line-height:20px;font-size:12.5px;color:#bbbbbb;left:563px;">Code Linter</span><svg style="left:644.5px;top:831.2px;" width="12" height="13" viewBox="0 0 12 13"><rect x="1.5" y="0.8" width="9.5" height="11.4" fill="none" stroke="#8c8f91" stroke-width="1.1"/><path d="M0 3.5H3M0 6.5H3M0 9.5H3" stroke="#8c8f91" stroke-width="1"/><path d="M4.5 4H9M4.5 6.5H9M4.5 9H7.5" stroke="#8c8f91" stroke-width="1"/></svg><span class="t" style="letter-spacing:-0.500px;top:829.0px;height:20px;line-height:20px;font-size:11.5px;color:#bbbbbb;left:661px;">预览器日志</span><svg style="left:6px;top:854px;" width="13" height="13" viewBox="0 0 13 13"><rect x="0.6" y="2.6" width="9" height="9" fill="#3c3f41" stroke="#afb1b3" stroke-width="1.1"/><path d="M3 2.6V0.6H12.4V10H10" fill="none" stroke="#afb1b3" stroke-width="1.1"/></svg><span class="t" style="letter-spacing:0.217px;top:850.0px;height:20px;line-height:20px;font-size:12.5px;color:#bbbbbb;left:27.5px;">Sync project finished in 11 s 305 ms (today 8:13)</span><div style="left:1700.5px;top:854px;width:12px;height:12px;border-radius:50%;background:#2f9e36;"></div><span class="t" style="letter-spacing:-0.086px;top:850.0px;height:20px;line-height:20px;font-size:12.5px;color:#bbbbbb;left:1724.5px;">41:2</span><span class="t" style="letter-spacing:-1.047px;top:850.0px;height:20px;line-height:20px;font-size:12.5px;color:#bbbbbb;left:1761px;">LF</span><span class="t" style="letter-spacing:-0.284px;top:850.0px;height:20px;line-height:20px;font-size:12.5px;color:#bbbbbb;left:1785px;">UTF-8</span><span class="t" style="letter-spacing:0.121px;top:850.0px;height:20px;line-height:20px;font-size:12.5px;color:#bbbbbb;left:1831px;">2 spaces</span><svg style="left:1891px;top:853px;" width="13" height="13" viewBox="0 0 13 13"><rect x="4.5" y="6" width="8" height="6.5" fill="#afb1b3"/><path d="M1.2 7V3.8A2.3 2.3 0 0 1 5.8 3.8V6" fill="none" stroke="#afb1b3" stroke-width="1.4"/></svg><div style="left:0;top:871px;width:1918px;height:47px;background:linear-gradient(90deg,#1c2424 0%,#1b2322 5.2%,#1a2523 15.6%,#172829 20.8%,#132b2e 22.4%,#112c32 28.7%,#122a44 30.2%,#13294b 31.8%,#142d3c 33.1%,#152f30 34.4%,#15302f 40%,#152c30 52%,#152a38 59%,#14263f 62.5%,#162a55 65.7%,#1f1c6c 67.8%,#2a1680 69.9%,#2c1478 73%,#30136a 75.6%,#33145f 78.2%,#331556 81.3%,#30154c 84.5%,#2b1642 88%,#2d193f 100%);"></div><div style="left:0px;top:870px;width:1918px;height:1px;background:#2f3536;"></div><svg style="left:19px;top:882px;" width="24" height="22" viewBox="0 0 24 22"><defs><linearGradient id="nw" x1="0" y1="0" x2="0" y2="1"><stop offset="0" stop-color="#ff7a4a"/><stop offset="1" stop-color="#d83a1e"/></linearGradient></defs><rect x="1" y="3" width="20" height="17" rx="2" fill="url(#nw)"/><rect x="3.5" y="7" width="15" height="3" fill="#ffd9cc"/><rect x="3.5" y="11.5" width="7" height="6" fill="#fff0ea"/><rect x="12" y="11.5" width="6.5" height="2" fill="#ffc4b0"/><rect x="12" y="15" width="6.5" height="2" fill="#ffc4b0"/></svg><div style="left:29.5px;top:876px;width:16px;height:16px;border-radius:50%;background:#fb96a6;"></div><span class="t" style="top:877.5px;height:14px;line-height:14px;font-size:11.5px;color:#1a1a1a;left:34.5px;">1</span><span class="t" style="letter-spacing:-0.008px;top:878.0px;height:16px;line-height:16px;font-size:12px;color:#ffffff;left:51px;">今日</span><span class="t" style="letter-spacing:-0.008px;top:894.0px;height:16px;line-height:16px;font-size:12px;color:#d8d8d8;left:51px;">热点</span><svg style="left:726px;top:883px;" width="23" height="23" viewBox="0 0 23 23"><defs><linearGradient id="wl" x1="0" y1="0" x2="1" y2="1"><stop offset="0" stop-color="#7fdcff"/><stop offset="1" stop-color="#1e9df0"/></linearGradient></defs><rect x="0" y="0" width="11" height="11" rx=".8" fill="url(#wl)"/><rect x="12" y="0" width="11" height="11" rx=".8" fill="url(#wl)"/><rect x="0" y="12" width="11" height="11" rx=".8" fill="url(#wl)"/><rect x="12" y="12" width="11" height="11" rx=".8" fill="url(#wl)"/></svg><div style="left:762px;top:878px;width:220px;height:32px;box-sizing:border-box;border-radius:16px;background:#33504d;border:1px solid #47625f;"></div><div style="left:927px;top:881px;width:51px;height:26px;border-radius:13px;background:#46615e;"></div><svg style="left:773px;top:886px;" width="16" height="16" viewBox="0 0 16 16"><circle cx="6.6" cy="6.6" r="5.3" fill="none" stroke="#f0f0f0" stroke-width="1.5"/><path d="M10.4 10.4L15 15" stroke="#f0f0f0" stroke-width="1.7" stroke-linecap="round"/></svg><span class="t" style="letter-spacing:0.250px;top:884.0px;height:20px;line-height:20px;font-size:14px;color:#e4e8e8;left:799px;">搜索</span><svg style="left:942px;top:884px;" width="22" height="20" viewBox="0 0 22 20"><defs><linearGradient id="bc" x1="0" y1="0" x2="0" y2="1"><stop offset="0" stop-color="#f5a01a"/><stop offset=".5" stop-color="#e8900f"/><stop offset=".52" stop-color="#c86f08"/><stop offset="1" stop-color="#b96206"/></linearGradient></defs><path d="M7.5 3V1.2H14.5V3" fill="none" stroke="#3a2a20" stroke-width="1.6"/><rect x="0" y="2.6" width="22" height="16.6" rx="1.5" fill="url(#bc)"/><rect x="9" y="9" width="4" height="3.6" fill="#ffd84a" stroke="#c98a10" stroke-width=".6"/></svg><div style="left:1000px;top:883px;width:18px;height:16px;background:#f4f4f4;border-radius:2px;"></div><div style="left:994px;top:889px;width:18px;height:16px;background:rgba(120,120,120,0.92);border-radius:2px;"></div><svg style="left:1038px;top:883px;" width="25" height="22" viewBox="0 0 25 22"><path d="M0 2A1.5 1.5 0 0 1 1.5 .5H8L10.5 3H23A1.5 1.5 0 0 1 24.5 4.5V7H0Z" fill="#e8a825"/><rect x="0" y="4.5" width="24.5" height="17" rx="1.5" fill="#ffd04f"/><path d="M5 21.5V17.5A1.5 1.5 0 0 1 6.5 16H18A1.5 1.5 0 0 1 19.5 17.5V21.5Z" fill="#1c8ae0"/><path d="M8 18.5H16.5" stroke="#1670c0" stroke-width="1.2"/></svg><svg style="left:1082px;top:882px;" width="24" height="24" viewBox="0 0 24 24"><defs><linearGradient id="eg1" x1="0" y1="0" x2="1" y2="1"><stop offset="0" stop-color="#36c8e8"/><stop offset=".55" stop-color="#3fc46a"/><stop offset="1" stop-color="#7edb4c"/></linearGradient><linearGradient id="eg2" x1="0" y1="0" x2="0" y2="1"><stop offset="0" stop-color="#1b8be0"/><stop offset="1" stop-color="#0f4fa8"/></linearGradient></defs><circle cx="12" cy="12" r="11.6" fill="url(#eg2)"/><path d="M1 10A11.6 11.6 0 0 1 23.6 11.5C23.6 15 20 16.5 17 15.5C19 13 16 9 12 9C8 9 4.5 12 5.5 17C2.5 16 0.5 13 1 10Z" fill="url(#eg1)"/><path d="M12 9C9 9.5 7.5 12.5 8.5 15.5C9.6 19 13.5 21.5 18 20C15 20 12.5 17.5 13 14.5C13.3 12.8 15 12.5 15.8 13.5C15.8 11 14.5 9 12 9Z" fill="#0c3f8c"/></svg><div style="left:1091px;top:909.5px;width:6px;height:3px;border-radius:1.5px;background:#8a9098;"></div><svg style="left:1126px;top:882px;" width="24" height="25" viewBox="0 0 24 25"><path d="M7.5 6.5V3A1.8 1.8 0 0 1 9.3 1.2H14.7A1.8 1.8 0 0 1 16.5 3V6.5" fill="none" stroke="#2aa4f0" stroke-width="1.8"/><path d="M0 6.5H24V21A3 3 0 0 1 21 24H3A3 3 0 0 1 0 21Z" fill="#f3f3f3"/><rect x="7" y="10" width="4.4" height="4.4" fill="#f25022"/><rect x="12.4" y="10" width="4.4" height="4.4" fill="#7fba00"/><rect x="7" y="15.4" width="4.4" height="4.4" fill="#00a4ef"/><rect x="12.4" y="15.4" width="4.4" height="4.4" fill="#ffb900"/></svg><div style="left:1162px;top:874px;width:40px;height:40px;box-sizing:border-box;border-radius:5px;background:rgba(255,255,255,0.075);border:1px solid rgba(255,255,255,0.06);"></div><svg style="left:1170px;top:884px;" width="24" height="19.5" viewBox="0 0 16.5 13.9"><defs><linearGradient id="lab" x1="0.6" y1="0" x2="0.2" y2="1"><stop offset="0" stop-color="#4fe6f0"/><stop offset="1" stop-color="#18a0dc"/></linearGradient><linearGradient id="lbb" x1="0.2" y1="0" x2="0.7" y2="1"><stop offset="0" stop-color="#2468de"/><stop offset=".7" stop-color="#3a78e0"/><stop offset="1" stop-color="#3f62d2"/></linearGradient></defs><path d="M6.56 0H10.2L8.1 4.9L4.4 9.9H7.3V13.9H2.3L0 10.4Z" fill="url(#lab)"/><path d="M10.2 0L16.5 10.4L14.5 13.9H9V9.9H12.05L8.1 4.9Z" fill="url(#lbb)"/></svg><div style="left:1174px;top:910px;width:16px;height:3px;border-radius:1.5px;background:#d98be2;"></div><svg style="left:1693px;top:889px;" width="12" height="8" viewBox="0 0 12 8"><path d="M1 6.5L6 1.5L11 6.5" fill="none" stroke="#ffffff" stroke-width="1.5"/></svg><span class="t" style="top:884.0px;height:20px;line-height:20px;font-size:15px;color:#ffffff;left:1723.5px;">英</span><svg style="left:1755px;top:885px;" width="18" height="18" viewBox="0 0 18 18"><rect x="1" y="2.5" width="12" height="9.5" rx="1" fill="none" stroke="#fff" stroke-width="1.2"/><path d="M4 15.5H10M7 12V15.5" stroke="#fff" stroke-width="1.2"/><rect x="11.5" y="1" width="5" height="8.5" rx="1" fill="#2b1642" stroke="#fff" stroke-width="1.2"/><path d="M14 3V5" stroke="#fff" stroke-width="1.2"/></svg><svg style="left:1779px;top:886px;" width="18" height="16" viewBox="0 0 18 16"><path d="M1 5.5H4L8 2V14L4 10.5H1Z" fill="none" stroke="#fff" stroke-width="1.2" stroke-linejoin="round"/><path d="M10.5 5.5Q12 8 10.5 10.5M12.8 3.8Q15.4 8 12.8 12.2M15 2Q18.5 8 15 14" fill="none" stroke="#fff" stroke-width="1.1"/></svg><span class="t" style="top:878.0px;height:16px;line-height:16px;font-size:12px;color:#ffffff;right:43.5px;">11:37</span><span class="t" style="letter-spacing:0.194px;top:894.5px;height:16px;line-height:16px;font-size:12px;color:#ffffff;right:43.5px;">2023/12/18</span><svg style="left:1882px;top:886px;" width="15" height="16" viewBox="0 0 15 16"><path d="M7.5 0.8A5 5 0 0 1 12.5 5.8V10L14.3 12.6H0.7L2.5 10V5.8A5 5 0 0 1 7.5 0.8Z" fill="#e6b0f0"/><path d="M5.4 13.6A2.2 2.2 0 0 0 9.6 13.6Z" fill="#e6b0f0"/></svg><div style="left:1910px;top:818px;width:5.5px;height:52px;background:#46525f;border-radius:2.75px;"></div><div style="left:1911.8px;top:831px;width:2px;height:35px;background:linear-gradient(180deg,#f04a2c,#e2700f);"></div><div style="left:1907.7px;top:861px;width:10px;height:10px;box-sizing:border-box;border-radius:50%;background:#df7410;border:1px solid #4a5560;"></div>
</div></body></html>
